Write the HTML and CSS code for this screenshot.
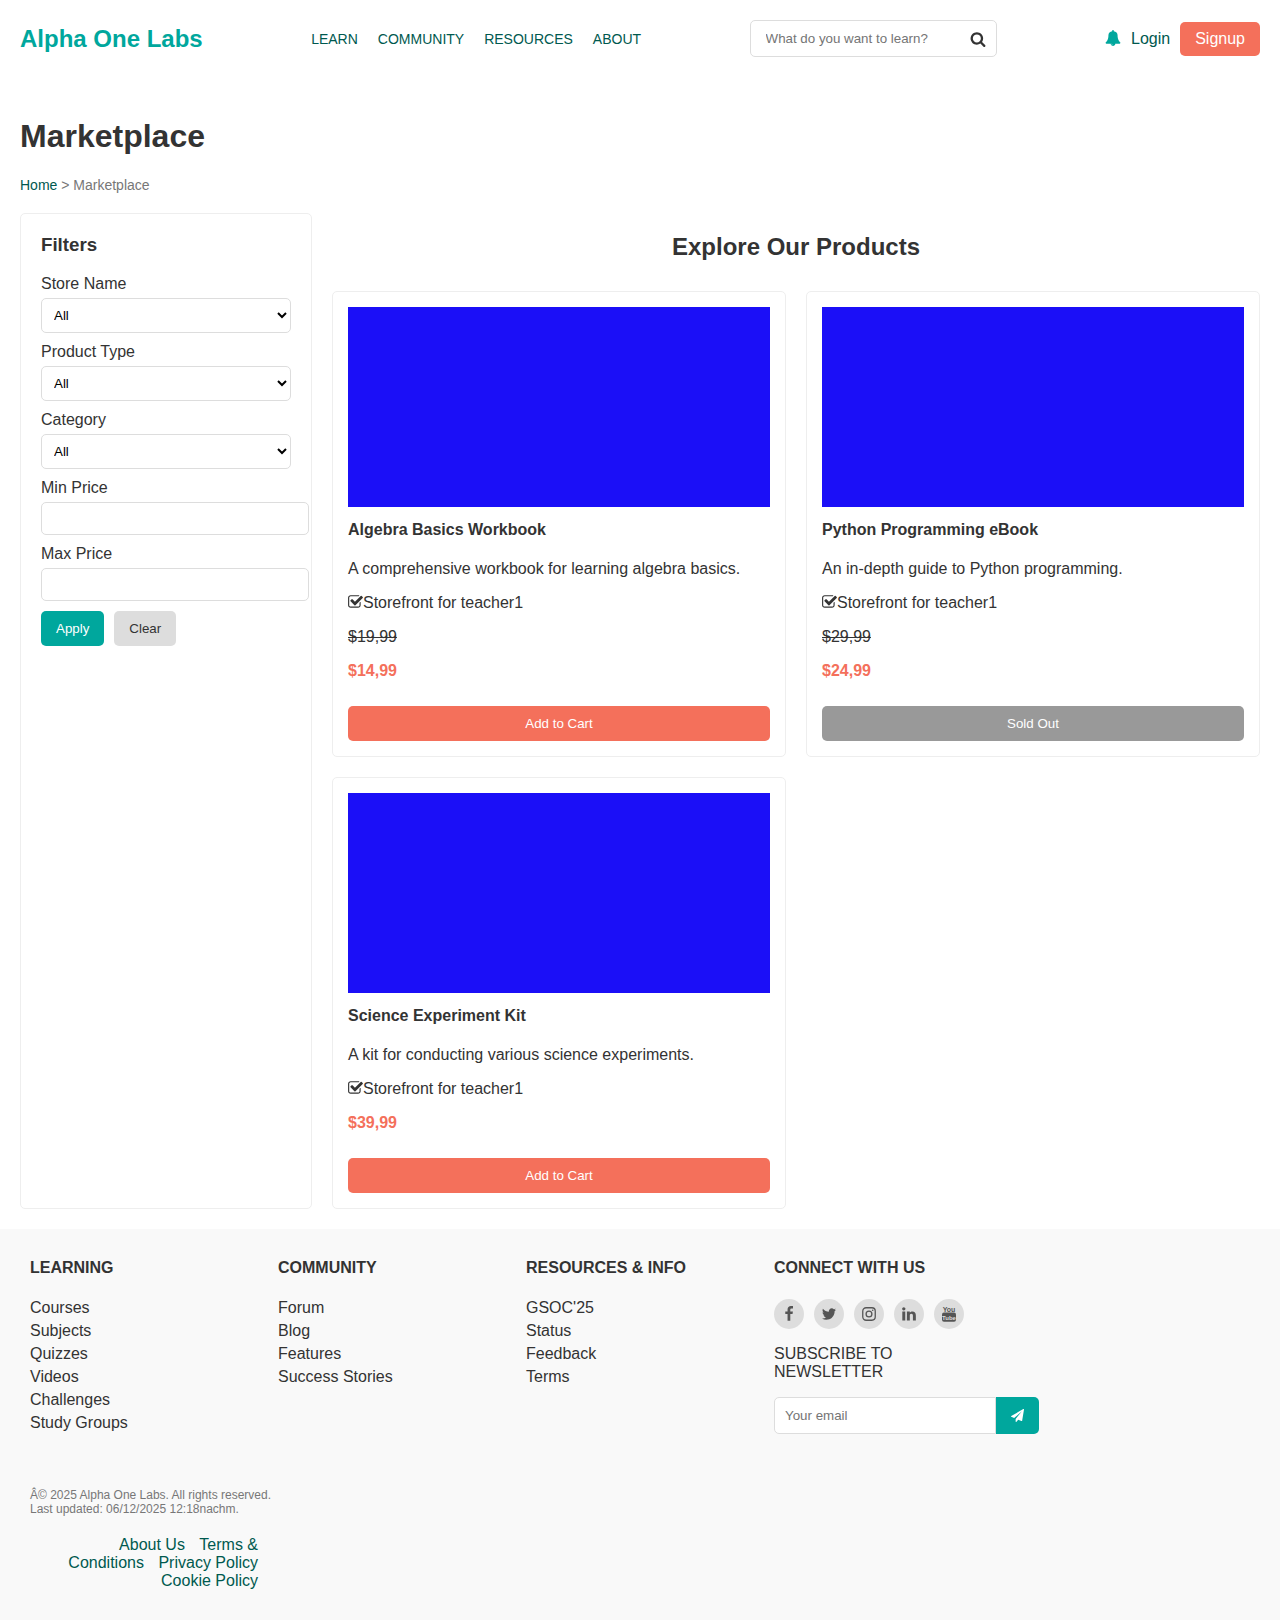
FILE: index.html
```html
<!DOCTYPE html>
<html lang="en">
<head>
<meta charset="utf-8">
<meta name="viewport" content="width=device-width, initial-scale=1">
<title>Marketplace</title>
<link rel="stylesheet" href="styles.css">
</head>
<body>
<svg class="sprite" aria-hidden="true">
  <symbol id="check" viewBox="64 0 1664 1792"><path d="M1472 930v318q0 119-84.5 203.5t-203.5 84.5h-832q-119 0-203.5-84.5t-84.5-203.5v-832q0-119 84.5-203.5t203.5-84.5h832q63 0 117 25 15 7 18 23 3 17-9 29l-49 49q-10 10-23 10-3 0-9-2-23-6-45-6h-832q-66 0-113 47t-47 113v832q0 66 47 113t113 47h832q66 0 113-47t47-113v-254q0-13 9-22l64-64q10-10 23-10 6 0 12 3 20 8 20 29zm231-489l-814 814q-24 24-57 24t-57-24l-430-430q-24-24-24-57t24-57l110-110q24-24 57-24t57 24l263 263 647-647q24-24 57-24t57 24l110 110q24 24 24 57t-24 57z"/></symbol>
</svg>

<header class="header">
  <a class="logo" href="#">Alpha One Labs</a>
  <nav class="nav">
    <a href="#">LEARN</a>
    <a href="#">COMMUNITY</a>
    <a href="#">RESOURCES</a>
    <a href="#">ABOUT</a>
  </nav>
  <form class="search">
    <input class="search-input" type="text" placeholder="What do you want to learn?" aria-label="Search">
    <button class="search-button" type="button" aria-label="Search">
      <svg class="icon" viewBox="0 0 1792 1792"><path d="M1216 832q0-185-131.5-316.5t-316.5-131.5-316.5 131.5-131.5 316.5 131.5 316.5 316.5 131.5 316.5-131.5 131.5-316.5zm512 832q0 52-38 90t-90 38q-54 0-90-38l-343-342q-179 124-399 124-143 0-273.5-55.5t-225-150-150-225-55.5-273.5 55.5-273.5 150-225 225-150 273.5-55.5 273.5 55.5 225 150 150 225 55.5 273.5q0 220-124 399l343 343q37 37 37 90z"/></svg>
    </button>
  </form>
  <div class="account">
    <a class="bell" href="#" aria-label="Notifications"><svg class="icon" viewBox="0 0 1792 1792"><path d="M912 1696q0-16-16-16-59 0-101.5-42.5t-42.5-101.5q0-16-16-16t-16 16q0 73 51.5 124.5t124.5 51.5q16 0 16-16zm816-288q0 52-38 90t-90 38h-448q0 106-75 181t-181 75-181-75-75-181h-448q-52 0-90-38t-38-90q50-42 91-88t85-119.5 74.5-158.5 50-206 19.5-260q0-152 117-282.5t307-158.5q-8-19-8-39 0-40 28-68t68-28 68 28 28 68q0 20-8 39 190 28 307 158.5t117 282.5q0 139 19.5 260t50 206 74.5 158.5 85 119.5 91 88z"/></svg></a>
    <a href="#">Login</a>
    <a class="signup" href="#">Signup</a>
  </div>
</header>

<main class="main">
  <h1 class="page-title">Marketplace</h1>
  <div class="breadcrumb"><a href="#">Home</a> &gt; Marketplace</div>

  <div class="market">
    <aside class="filters">
      <h3 class="filters-title">Filters</h3>
      <form class="filter-form">
        <label for="store">Store Name</label>
        <select class="field" id="store"><option>All</option></select>
        <label for="type">Product Type</label>
        <select class="field" id="type"><option>All</option></select>
        <label for="category">Category</label>
        <select class="field" id="category"><option>All</option></select>
        <label for="min">Min Price</label>
        <input class="field price-field" id="min" type="text">
        <label for="max">Max Price</label>
        <input class="field price-field" id="max" type="text">
        <div class="filter-actions">
          <button class="button apply" type="button">Apply</button>
          <button class="button clear" type="button">Clear</button>
        </div>
      </form>
    </aside>

    <section>
      <h2 class="section-title">Explore Our Products</h2>
      <div class="products">
        <article class="card">
          <div class="card-image"></div>
          <h4 class="card-title">Algebra Basics Workbook</h4>
          <p>A comprehensive workbook for learning algebra basics.</p>
          <p class="store"><svg class="check"><use href="#check"/></svg>Storefront for teacher1</p>
          <p class="old-price">$19,99</p>
          <p class="price">$14,99</p>
          <button class="button buy" type="button">Add to Cart</button>
        </article>
        <article class="card">
          <div class="card-image"></div>
          <h4 class="card-title">Python Programming eBook</h4>
          <p>An in-depth guide to Python programming.</p>
          <p class="store"><svg class="check"><use href="#check"/></svg>Storefront for teacher1</p>
          <p class="old-price">$29,99</p>
          <p class="price">$24,99</p>
          <button class="button buy" type="button" disabled>Sold Out</button>
        </article>
        <article class="card">
          <div class="card-image"></div>
          <h4 class="card-title">Science Experiment Kit</h4>
          <p>A kit for conducting various science experiments.</p>
          <p class="store"><svg class="check"><use href="#check"/></svg>Storefront for teacher1</p>
          <p class="price">$39,99</p>
          <button class="button buy" type="button">Add to Cart</button>
        </article>
      </div>
    </section>
  </div>
</main>

<footer class="footer">
  <div class="footer-column">
    <h4>LEARNING</h4>
    <ul>
      <li><a href="#">Courses</a></li>
      <li><a href="#">Subjects</a></li>
      <li><a href="#">Quizzes</a></li>
      <li><a href="#">Videos</a></li>
      <li><a href="#">Challenges</a></li>
      <li><a href="#">Study Groups</a></li>
    </ul>
  </div>
  <div class="footer-column">
    <h4>COMMUNITY</h4>
    <ul>
      <li><a href="#">Forum</a></li>
      <li><a href="#">Blog</a></li>
      <li><a href="#">Features</a></li>
      <li><a href="#">Success Stories</a></li>
    </ul>
  </div>
  <div class="footer-column">
    <h4>RESOURCES &amp; INFO</h4>
    <ul>
      <li><a href="#">GSOC'25</a></li>
      <li><a href="#">Status</a></li>
      <li><a href="#">Feedback</a></li>
      <li><a href="#">Terms</a></li>
    </ul>
  </div>
  <div class="footer-column">
    <h4>CONNECT WITH US</h4>
    <div class="social">
      <a href="#" aria-label="Facebook"><svg class="icon" viewBox="0 0 1792 1792"><path d="M1343 12v264h-157q-86 0-116 36t-30 108v189h293l-39 296h-254v759h-306v-759h-255v-296h255v-218q0-186 104-288.5t277-102.5q147 0 228 12z"/></svg></a>
      <a href="#" aria-label="Twitter"><svg class="icon" viewBox="0 0 1792 1792"><path d="M1684 408q-67 98-162 167 1 14 1 42 0 130-38 259.5t-115.5 248.5-184.5 210.5-258 146-323 54.5q-271 0-496-145 35 4 78 4 225 0 401-138-105-2-188-64.5t-114-159.5q33 5 61 5 43 0 85-11-112-23-185.5-111.5t-73.5-205.5v-4q68 38 146 41-66-44-105-115t-39-154q0-88 44-163 121 149 294.5 238.5t371.5 99.5q-8-38-8-74 0-134 94.5-228.5t228.5-94.5q140 0 236 102 109-21 205-78-37 115-142 178 93-10 186-50z"/></svg></a>
      <a href="#" aria-label="Instagram"><svg class="icon" viewBox="0 0 16 16"><rect x="1.75" y="1.75" width="12.5" height="12.5" rx="3.4" fill="none" stroke="currentColor" stroke-width="1.3"/><circle cx="8" cy="8" r="2.9" fill="none" stroke="currentColor" stroke-width="1.3"/><circle cx="11.7" cy="4.3" r=".8"/></svg></a>
      <a href="#" aria-label="LinkedIn"><svg class="icon" viewBox="0 0 1792 1792"><path d="M477 625v991h-330v-991h330zm21-306q1 73-50.5 122t-135.5 49h-2q-82 0-132-49t-50-122q0-74 51.5-122.5t134.5-48.5 133 48.5 51 122.5zm1166 729v568h-329v-530q0-105-40.5-164.5t-126.5-59.5q-63 0-105.5 34.5t-63.5 85.5q-11 30-11 81v553h-329q2-399 2-647t-1-296l-1-48h329v144h-2q20-32 41-56t56.5-52 87-43.5 114.5-15.5q171 0 275 113.5t104 332.5z"/></svg></a>
      <a href="#" aria-label="YouTube"><svg class="icon" viewBox="0 0 16 16"><text class="tube-text" x="8" y="5.5" font-size="7">You</text><rect x="1" y="6.6" width="14" height="9.2" rx="2"/><text class="tube-text tube-light" x="8" y="13.8" font-size="6">Tube</text></svg></a>
    </div>
    <p class="subscribe">SUBSCRIBE TO NEWSLETTER</p>
    <form class="newsletter">
      <input type="email" placeholder="Your email" aria-label="Your email">
      <button type="button" aria-label="Subscribe"><svg viewBox="0 0 1792 1792"><path d="M1764 11q33 24 27 64l-256 1536q-5 29-32 45-14 8-31 8-11 0-24-5l-453-185-242 295q-18 23-49 23-13 0-22-4-19-7-30.5-23.5t-11.5-36.5v-349l864-1059-1069 925-395-162q-37-14-40-55-2-40 32-59l1664-960q15-9 32-9 20 0 36 11z"/></svg></button>
    </form>
  </div>
  <div class="footer-column footer-legal">
    <p class="copyright">Â© 2025 Alpha One Labs. All rights reserved.<br>Last updated: 06/12/2025 12:18nachm.</p>
    <div class="legal-links">
      <a href="#">About Us</a>
      <a href="#">Terms &amp; Conditions</a>
      <a href="#">Privacy Policy</a>
      <a href="#">Cookie Policy</a>
    </div>
  </div>
</footer>
</body>
</html>
```
FILE: styles.css
```css
:root {
  --teal: #00a79d;
  --dark-teal: #00594f;
  --coral: #f4705b;
  --text: #333;
  --line: #eee;
  --field-line: #ddd;
}

* {
  box-sizing: border-box;
}

body {
  margin: 0;
  background: #fff;
  color: var(--text);
  font: 16px/18px "Liberation Sans", Arial, sans-serif;
}

a {
  color: var(--dark-teal);
  text-decoration: none;
}

input,
button,
select {
  font-family: inherit;
}

.sprite {
  display: none;
}

.icon {
  display: block;
  width: 16px;
  height: 16px;
  fill: currentColor;
}

/* Header */
.header {
  display: flex;
  align-items: center;
  justify-content: space-between;
  padding: 20px;
}

.logo {
  color: var(--teal);
  font-size: 24px;
  font-weight: bold;
  line-height: 28px;
}

.nav {
  display: flex;
  gap: 20px;
  font-size: 14px;
  line-height: 16px;
}

.search {
  display: flex;
  align-items: center;
  width: 247px;
  border: 1px solid var(--field-line);
  border-radius: 5px;
}

.search-input {
  flex: 1;
  min-width: 0;
  padding: 10px 0 10px 15px;
  border: 0;
  background: none;
  line-height: 15px;
}

.search-button {
  padding: 0 10px;
  border: 0;
  background: none;
  color: var(--text);
}

.account {
  display: flex;
  align-items: center;
  gap: 10px;
}

.bell {
  padding-bottom: 1px;
  color: var(--teal);
}

.signup {
  padding: 8px 15px;
  border-radius: 5px;
  background: var(--coral);
  color: #fff;
}

/* Page */
.main {
  padding: 20px;
}

.page-title {
  margin: 21px 0 22px;
  font-size: 32px;
  line-height: 37px;
}

.breadcrumb {
  margin-bottom: 20px;
  color: #777;
  font-size: 14px;
  line-height: 16px;
}

.market {
  display: grid;
  grid-template-columns: 292px 1fr;
  gap: 20px;
}

/* Filters */
.filters {
  padding: 20px;
  border: 1px solid var(--line);
  border-radius: 5px;
}

.filters-title {
  margin: 0 0 19px;
  line-height: 22px;
}

.filter-form {
  display: flex;
  flex-direction: column;
}

.field {
  margin: 5px 0 10px;
  padding: 8px;
  border: 1px solid var(--field-line);
  border-radius: 5px;
  background: #fff;
  color: #000;
  height: 35px;
}

.price-field {
  width: calc(100% + 18px);
  height: 33px;
}

.filter-actions {
  display: flex;
  gap: 10px;
}

.button {
  padding: 10px 15px;
  border: 0;
  border-radius: 5px;
  line-height: 15px;
}

.apply {
  background: var(--teal);
  color: #fff;
}

.clear {
  background: #ddd;
  color: var(--text);
}

/* Products */
.section-title {
  margin: 20px 0 30px;
  font-size: 24px;
  line-height: 28px;
  text-align: center;
}

.products {
  display: grid;
  grid-template-columns: 1fr 1fr;
  gap: 20px;
}

.card {
  padding: 15px;
  border: 1px solid var(--line);
  border-radius: 5px;
}

.card p {
  margin: 0 0 16px;
}

.card-image {
  height: 200px;
  background: #1b0ff7;
}

.card-title {
  margin: 14px 0 21px;
}

.store {
  display: flex;
  align-items: flex-start;
}

.check {
  width: 15px;
  height: 16px;
  fill: currentColor;
}

.old-price {
  text-decoration: line-through;
}

.price {
  color: var(--coral);
  font-weight: bold;
}

.buy {
  width: 100%;
  margin-top: 10px;
  background: var(--coral);
  color: #fff;
}

.buy:disabled {
  background: #999;
}

/* Footer */
.footer {
  display: grid;
  grid-template-columns: repeat(5, 1fr);
  padding: 20px;
  background: #f9f9f9;
}

.footer-column {
  min-width: 0;
  padding: 10px;
}

.footer h4 {
  margin: 0 0 22px;
}

.footer ul {
  margin: 0 0 20px;
  padding: 0;
  list-style: none;
}

.footer li {
  margin-bottom: 5px;
}

.footer li a {
  color: var(--text);
}

.social {
  display: flex;
  gap: 10px;
}

.social a {
  display: grid;
  place-items: center;
  width: 30px;
  height: 30px;
  border-radius: 50%;
  background: #ddd;
  color: #555;
}

.tube-text {
  font-family: "Liberation Sans Narrow", "Liberation Sans", sans-serif;
  font-weight: bold;
  text-anchor: middle;
}

.tube-light {
  fill: #ddd;
}

.subscribe {
  margin: 16px 0;
}

.newsletter {
  display: flex;
}

.newsletter input {
  flex: none;
  width: 222px;
  padding: 10px;
  border: 1px solid var(--field-line);
  border-radius: 5px 0 0 5px;
  background: #fff;
  line-height: 15px;
}

.newsletter button {
  padding: 0 15px;
  border: 0;
  border-radius: 0 5px 5px 0;
  background: var(--teal);
  color: #fff;
}

.newsletter svg {
  display: block;
  width: 13px;
  height: 13px;
  fill: currentColor;
}

.footer-legal {
  grid-column: 1;
}

.copyright {
  margin: 16px 0 20px;
  color: #777;
  font-size: 12px;
  line-height: 14px;
  white-space: nowrap;
}

.legal-links {
  width: 200px;
  margin-left: auto;
  text-align: right;
}

.legal-links a {
  margin-left: 10px;
}
```
